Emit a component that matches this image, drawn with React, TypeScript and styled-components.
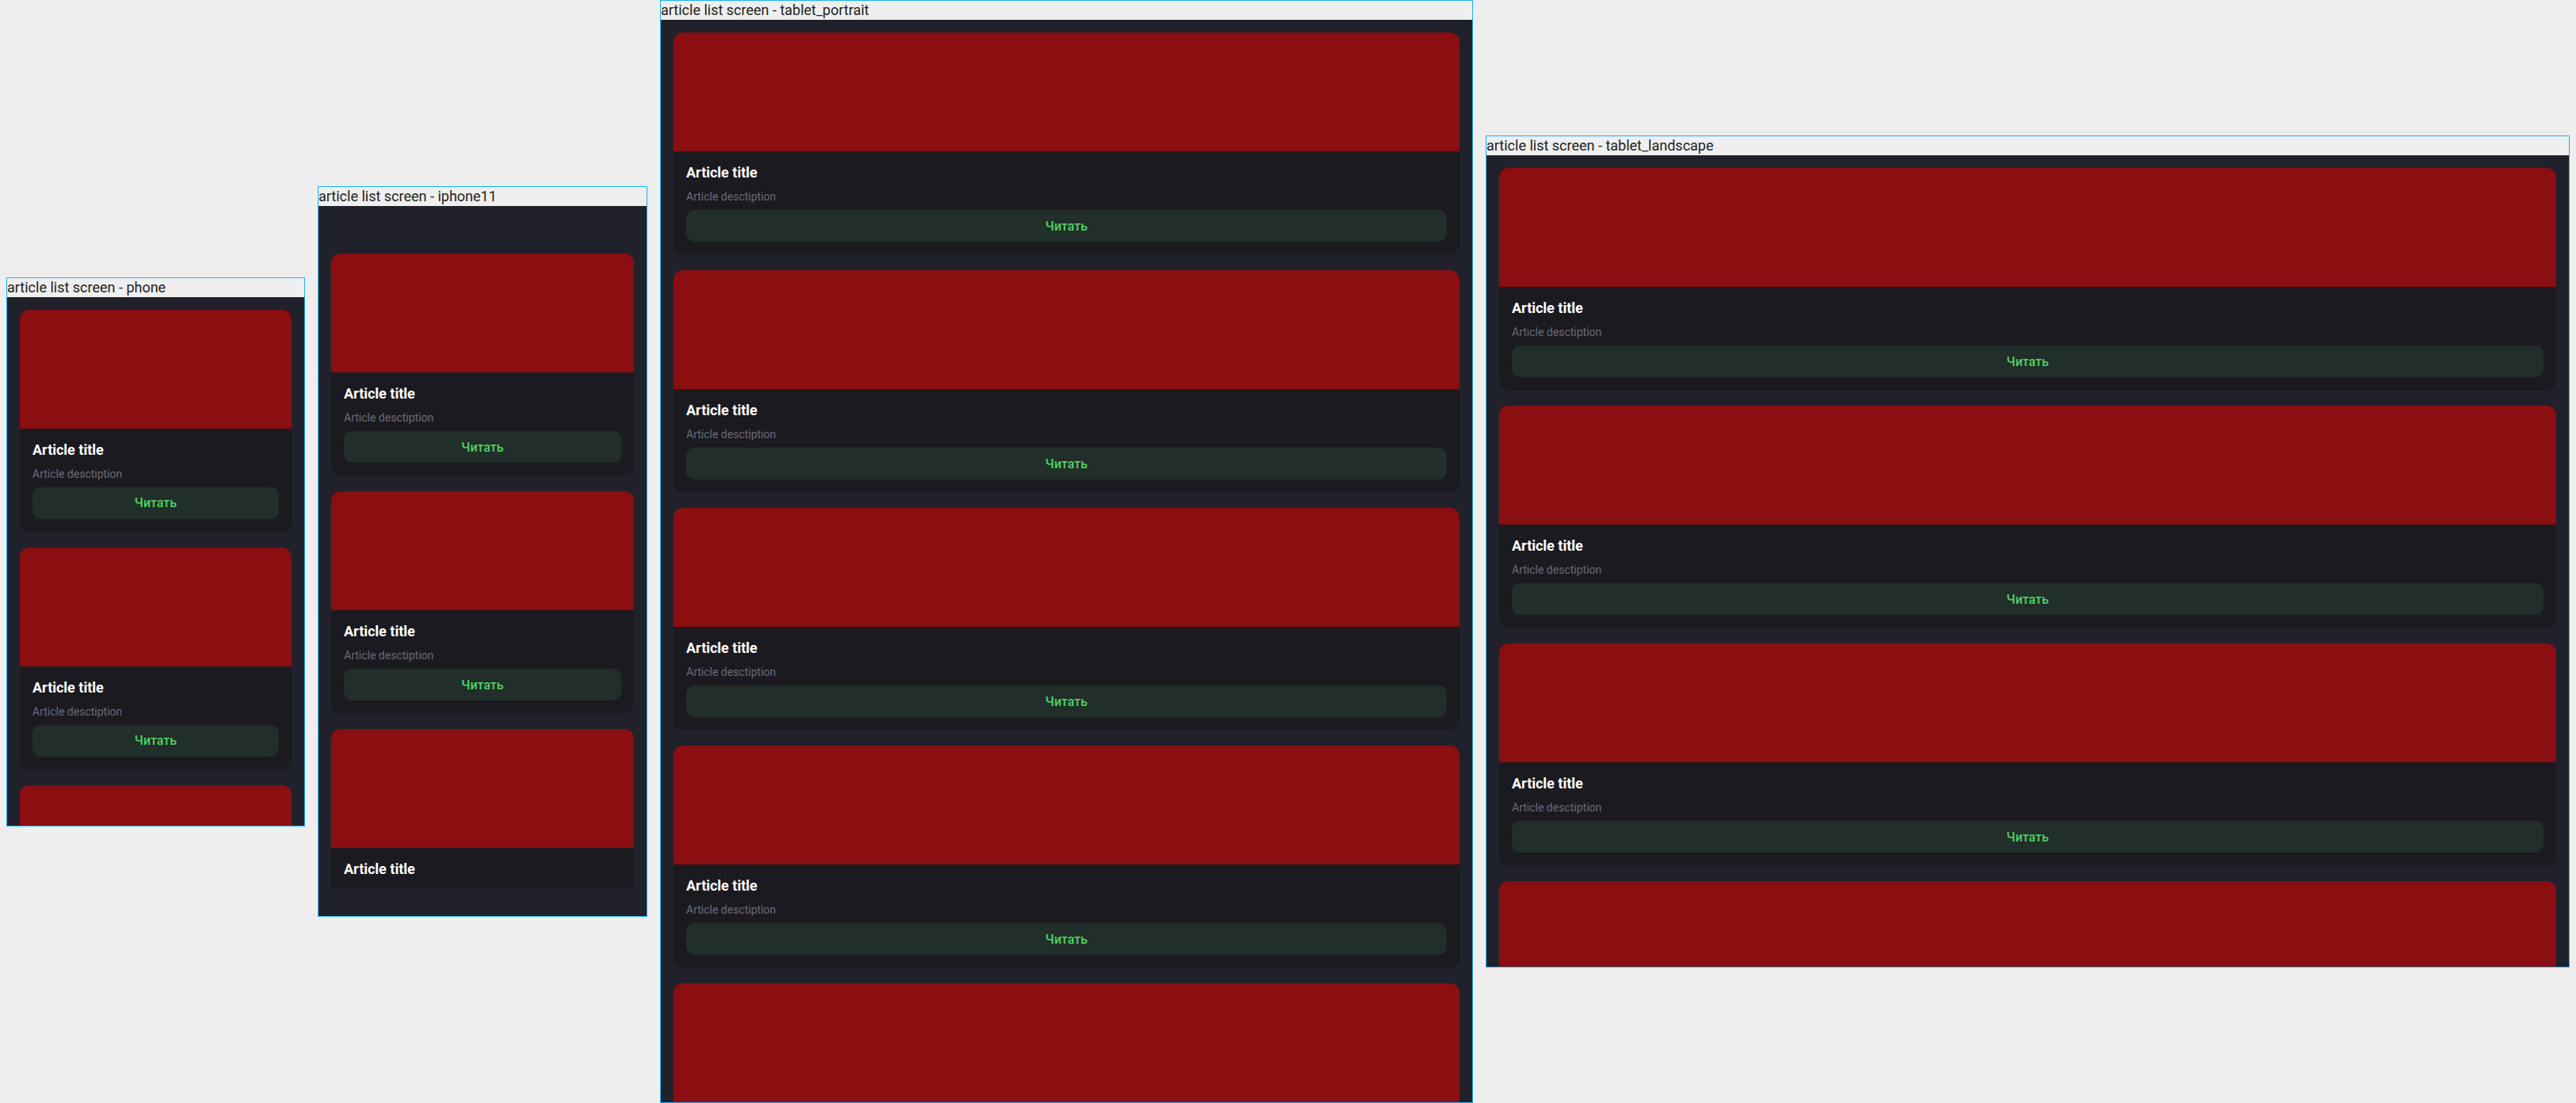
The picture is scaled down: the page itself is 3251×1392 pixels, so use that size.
import React from 'react';
import styled, { createGlobalStyle } from 'styled-components';

interface Device {
  name: string;
  width: number;
  height: number;
  safeTop: number;
  safeBottom: number;
}

const devices: Device[] = [
  { name: 'phone', width: 375, height: 667, safeTop: 0, safeBottom: 0 },
  { name: 'iphone11', width: 414, height: 896, safeTop: 44, safeBottom: 35 },
  { name: 'tablet_portrait', width: 1024, height: 1366, safeTop: 0, safeBottom: 0 },
  { name: 'tablet_landscape', width: 1366, height: 1024, safeTop: 0, safeBottom: 0 },
];

const articles = Array.from({ length: 6 }, (_, i) => ({
  id: i,
  title: 'Article title',
  description: 'Article desctiption',
}));

const GlobalStyle = createGlobalStyle`
  html, body {
    margin: 0;
    padding: 0;
    background: #eeeeee;
    font-family: Roboto, "Noto Sans", sans-serif;
  }
`;

const ArticleCard: React.FC<{ title: string; description: string }> = ({ title, description }) => (
  <Card>
    <CardImage />
    <CardBody>
      <Title>{title}</Title>
      <Description>{description}</Description>
      <ReadButton>Читать</ReadButton>
    </CardBody>
  </Card>
);

const App: React.FC = () => (
  <>
    <GlobalStyle />
    <Page>
      {devices.map((device) => (
        <Frame key={device.name}>
          <FrameLabel>article list screen - {device.name}</FrameLabel>
          <Screen
            $width={device.width}
            $height={device.height}
            $top={device.safeTop}
            $bottom={device.safeBottom}
          >
            <List>
              {articles.map((a) => (
                <ArticleCard key={a.id} title={a.title} description={a.description} />
              ))}
            </List>
          </Screen>
        </Frame>
      ))}
    </Page>
  </>
);

const Page = styled.div`
  display: flex;
  align-items: center;
  gap: 16px;
  height: 100vh;
  padding: 0 8px;
  box-sizing: border-box;
`;

const Frame = styled.div`
  display: flex;
  flex-direction: column;
  flex-shrink: 0;
  border: 1px solid #1cb1f2;
  background: #efefef;
`;

const FrameLabel = styled.div`
  height: 24px;
  line-height: 24px;
  font-family: Roboto, sans-serif;
  font-size: 18px;
  font-weight: 400;
  color: #222222;
  white-space: nowrap;
  overflow: hidden;
`;

const Screen = styled.div<{ $width: number; $height: number; $top: number; $bottom: number }>`
  display: flex;
  flex-direction: column;
  width: ${(p) => p.$width}px;
  height: ${(p) => p.$height}px;
  padding: ${(p) => p.$top}px 0 ${(p) => p.$bottom}px;
  box-sizing: border-box;
  background: #21212b;
  overflow: hidden;
`;

const List = styled.div`
  flex: 1;
  min-height: 0;
  display: flex;
  flex-direction: column;
  gap: 20px;
  padding: 16px;
  overflow: hidden;
`;

const Card = styled.div`
  flex-shrink: 0;
  display: flex;
  flex-direction: column;
  background: #1b1a20;
  border-radius: 12px;
  overflow: hidden;
`;

const CardImage = styled.div`
  height: 150px;
  background: #8b0e11;
`;

const CardBody = styled.div`
  display: flex;
  flex-direction: column;
  padding: 16px;
`;

const Title = styled.div`
  font-size: 18px;
  line-height: 21px;
  font-weight: 700;
  color: #ffffff;
`;

const Description = styled.div`
  margin-top: 12px;
  font-size: 14px;
  line-height: 16px;
  color: #6c6b7a;
`;

const ReadButton = styled.button`
  margin-top: 9px;
  height: 40px;
  border: none;
  border-radius: 10px;
  background: #222e29;
  color: #4fd463;
  font-family: Roboto, sans-serif;
  font-size: 16px;
  font-weight: 500;
  cursor: pointer;
`;

export default App;
